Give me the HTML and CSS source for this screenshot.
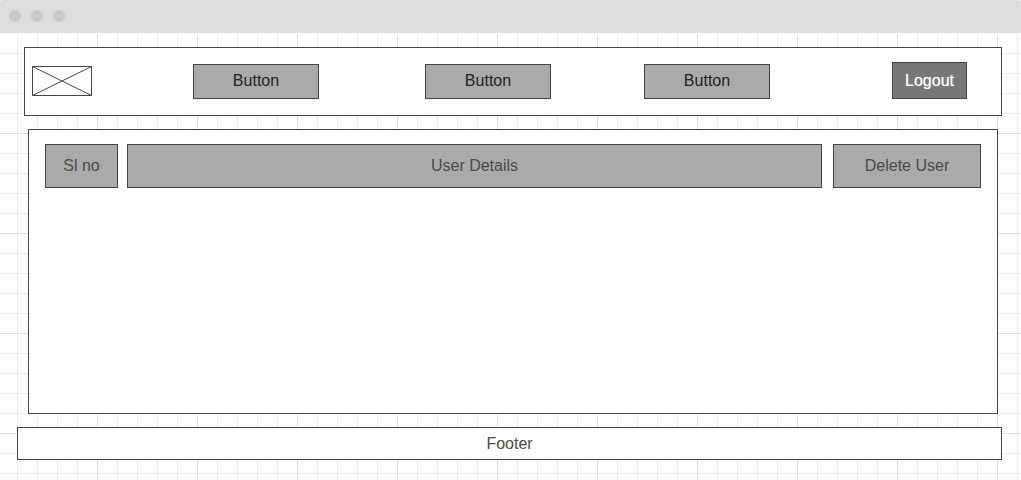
FILE: index.html
```html
<!DOCTYPE html>
<html lang="en">
<head>
<meta charset="utf-8">
<title>User Details</title>
<link rel="stylesheet" href="styles.css">
</head>
<body>
<div class="window-bar">
  <span class="dot"></span><span class="dot"></span><span class="dot"></span>
</div>
<div class="canvas">
  <header class="header">
    <svg class="logo" viewBox="0 0 60 30" aria-hidden="true">
      <path d="M.5 .5H59.5V29.5H.5ZM.5 .5L59.5 29.5M59.5 .5L.5 29.5"/>
    </svg>
    <button class="button first" type="button">Button</button>
    <button class="button second" type="button">Button</button>
    <button class="button third" type="button">Button</button>
    <button class="button logout" type="button">Logout</button>
  </header>
  <main class="panel">
    <table class="users">
      <thead>
        <tr class="row">
          <th class="cell number" scope="col">Sl no</th>
          <th class="cell details" scope="col">User Details</th>
          <th class="cell delete" scope="col">Delete User</th>
        </tr>
      </thead>
    </table>
  </main>
  <footer class="footer">Footer</footer>
</div>
</body>
</html>
```
FILE: styles.css
```css
* {
  box-sizing: border-box;
}

body {
  display: flex;
  flex-direction: column;
  min-height: 100vh;
  margin: 0;
  background: #fff;
  color: #4a4a4a;
  font: 16px/20px "Liberation Sans", Arial, sans-serif;
}

.window-bar {
  display: flex;
  align-items: center;
  gap: 10px;
  height: 33px;
  padding: 0 9px 1px;
  border-radius: 2px 3px 0 0;
  background: #ddd;
}

.dot {
  width: 12px;
  height: 12px;
  border-radius: 50%;
  background: #c9c9c9;
}

.canvas {
  display: flex;
  flex: 1;
  flex-direction: column;
  gap: 13px;
  padding: 14px 19px 20px 17px;
  background-image:
    linear-gradient(#fff 1px, transparent 1px),
    linear-gradient(90deg, #dfdfdf 1px, transparent 1px),
    linear-gradient(#dfdfdf 1px, transparent 1px),
    linear-gradient(90deg, #ededed 1px, transparent 1px),
    linear-gradient(#ededed 1px, transparent 1px);
  background-position: 0 0, 97px 0, 0 100px, 17px 0, 0 20px;
  background-repeat: no-repeat, repeat, repeat, repeat, repeat;
  background-size: 100% 1px, 100px 100px, 100px 100px, 20px 20px, 20px 20px;
}

.header,
.panel,
.footer {
  border: 1px solid #444;
  background: #fff;
}

.header {
  display: grid;
  grid-template-columns: 60px 101fr 126px 106fr 126px 93fr 126px 122fr 75px 34fr;
  align-items: end;
  margin-left: 7px;
  padding: 14px 0 16px 7px;
}

.logo {
  width: 60px;
  height: 30px;
  margin-bottom: 3px;
  fill: none;
  stroke: #444;
}

.button {
  height: 35px;
  padding: 0 0 2px;
  border: 1px solid #444;
  background: #aaa;
  color: #222;
  font: inherit;
}

.first {
  grid-column: 3;
}

.second {
  grid-column: 5;
}

.third {
  grid-column: 7;
}

.logout {
  grid-column: 9;
  height: 37px;
  padding: 0;
  background: #777;
  color: #fff;
  text-shadow: 0 0 1px #ccc;
}

.panel {
  flex: 1;
  margin: 0 4px 0 11px;
  padding: 14px 16px;
}

.users {
  display: block;
}

.users thead {
  display: block;
}

.row {
  display: flex;
}

.cell {
  padding: 11px 0;
  border: 1px solid #444;
  background: #aaa;
  font-weight: normal;
  text-align: center;
}

.number {
  width: 73px;
  margin-right: 9px;
}

.details {
  flex: 1;
  margin-right: 11px;
}

.delete {
  width: 148px;
}

.footer {
  padding: 6px 0 5px;
  text-align: center;
}
```
